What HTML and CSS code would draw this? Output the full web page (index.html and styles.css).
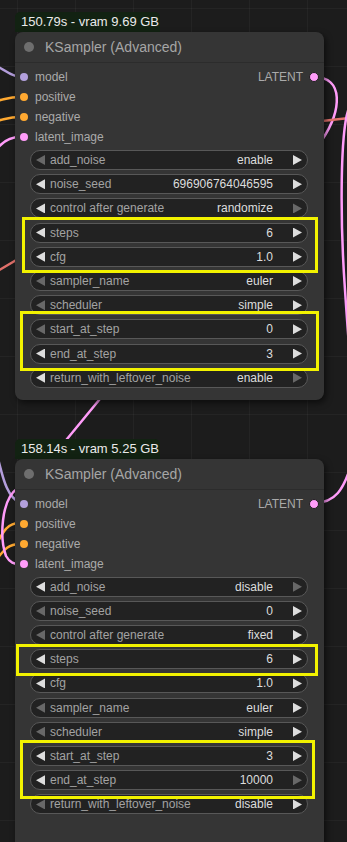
FILE: index.html
```html
<!DOCTYPE html>
<html>
<head>
<meta charset="utf-8">
<link rel="stylesheet" href="styles.css">
</head>
<body>
<svg class="links" width="347" height="842" viewBox="0 0 347 842">
  <g fill="none" stroke-width="2.5" stroke-linecap="round">
    <path d="M-4 66 C 6 70, 10 76, 20 77" stroke="#b39ddb"/>
    <path d="M-4 101 C 6 99, 10 97, 20 97" stroke="#ffa931"/>
    <path d="M-4 121 C 6 119, 10 117, 20 117" stroke="#ffa931"/>
    <path d="M-4 150 C 2 142, 10 137, 20 137" stroke="#ff9cf9"/>
    <path d="M-4 272 L 18 259" stroke="#e0706a"/>
    <path d="M314 77 C 344 77, 342 110, 322 140" stroke="#ff9cf9"/>
    <path d="M322 121 L 350 118" stroke="#e0706a"/>
    <path d="M349 108 C 340 130, 340 220, 345 290 C 347 320, 350 360, 352 380" stroke="#ff9cf9"/>
    <path d="M104 394 L 58 450" stroke="#ff9cf9"/>
    <path d="M-4 452 C 2 470, 4 495, 20 503" stroke="#b39ddb"/>
    <path d="M-4 545 C 4 530, 8 523, 20 523" stroke="#ffa931"/>
    <path d="M-4 560 C 4 550, 8 544, 20 544" stroke="#ffa931"/>
    <path d="M18 488 C 0 500, 0 540, 6 556 C 10 563, 14 564, 20 564" stroke="#ff9cf9"/>
    <path d="M314 503 C 335 503, 344 490, 352 462" stroke="#ff9cf9"/>
  </g>
</svg>
<div class="stack">
  <div class="badge">150.79s - vram 9.69 GB</div>
  <div class="node">
    <div class="title"><span class="tdot"></span>KSampler (Advanced)</div>
    <div class="io">
      <div class="col">
        <div class="slot"><i class="pin model"></i>model</div>
        <div class="slot"><i class="pin cond"></i>positive</div>
        <div class="slot"><i class="pin cond"></i>negative</div>
        <div class="slot"><i class="pin latent"></i>latent_image</div>
      </div>
      <div class="col">
        <div class="slot out">LATENT<i class="pin latent ring"></i></div>
      </div>
    </div>
    <div class="widgets">
      <div class="w"><span class="al dim"></span><span class="lbl">add_noise</span><span class="val">enable</span><span class="ar"></span></div>
      <div class="w"><span class="al"></span><span class="lbl">noise_seed</span><span class="val">696906764046595</span><span class="ar"></span></div>
      <div class="w"><span class="al"></span><span class="lbl">control after generate</span><span class="val">randomize</span><span class="ar dim"></span></div>
      <div class="hl hl-a">
        <div class="w"><span class="al"></span><span class="lbl">steps</span><span class="val">6</span><span class="ar"></span></div>
        <div class="w"><span class="al"></span><span class="lbl">cfg</span><span class="val">1.0</span><span class="ar"></span></div>
      </div>
      <div class="w"><span class="al dim"></span><span class="lbl">sampler_name</span><span class="val">euler</span><span class="ar"></span></div>
      <div class="w"><span class="al dim"></span><span class="lbl">scheduler</span><span class="val">simple</span><span class="ar"></span></div>
      <div class="hl hl-b">
        <div class="w"><span class="al dim"></span><span class="lbl">start_at_step</span><span class="val">0</span><span class="ar"></span></div>
        <div class="w"><span class="al"></span><span class="lbl">end_at_step</span><span class="val">3</span><span class="ar"></span></div>
      </div>
      <div class="w"><span class="al"></span><span class="lbl">return_with_leftover_noise</span><span class="val">enable</span><span class="ar dim"></span></div>
    </div>
  </div>

  <div class="badge second">158.14s - vram 5.25 GB</div>
  <div class="node tall">
    <div class="title"><span class="tdot"></span>KSampler (Advanced)</div>
    <div class="io">
      <div class="col">
        <div class="slot"><i class="pin model"></i>model</div>
        <div class="slot"><i class="pin cond"></i>positive</div>
        <div class="slot"><i class="pin cond"></i>negative</div>
        <div class="slot"><i class="pin latent"></i>latent_image</div>
      </div>
      <div class="col">
        <div class="slot out">LATENT<i class="pin latent ring"></i></div>
      </div>
    </div>
    <div class="widgets">
      <div class="w"><span class="al"></span><span class="lbl">add_noise</span><span class="val">disable</span><span class="ar dim"></span></div>
      <div class="w"><span class="al dim"></span><span class="lbl">noise_seed</span><span class="val">0</span><span class="ar"></span></div>
      <div class="w"><span class="al dim"></span><span class="lbl">control after generate</span><span class="val">fixed</span><span class="ar"></span></div>
      <div class="hl hl-c">
        <div class="w"><span class="al"></span><span class="lbl">steps</span><span class="val">6</span><span class="ar"></span></div>
      </div>
      <div class="w"><span class="al"></span><span class="lbl">cfg</span><span class="val">1.0</span><span class="ar"></span></div>
      <div class="w"><span class="al dim"></span><span class="lbl">sampler_name</span><span class="val">euler</span><span class="ar"></span></div>
      <div class="w"><span class="al dim"></span><span class="lbl">scheduler</span><span class="val">simple</span><span class="ar"></span></div>
      <div class="hl hl-d">
        <div class="w"><span class="al"></span><span class="lbl">start_at_step</span><span class="val">3</span><span class="ar"></span></div>
        <div class="w"><span class="al"></span><span class="lbl">end_at_step</span><span class="val">10000</span><span class="ar dim"></span></div>
      </div>
      <div class="w"><span class="al dim"></span><span class="lbl">return_with_leftover_noise</span><span class="val">disable</span><span class="ar"></span></div>
    </div>
  </div>
</div>
</body>
</html>
```

FILE: styles.css
```css
* { box-sizing: border-box; }
html, body { margin: 0; padding: 0; }
body {
  width: 347px;
  height: 842px;
  overflow: hidden;
  position: relative;
  background-color: #1c1c1c;
  background-image:
    linear-gradient(to right, rgba(255,255,255,0.035) 1px, transparent 1px),
    linear-gradient(to bottom, rgba(255,255,255,0.035) 1px, transparent 1px);
  background-size: 58px 58px;
  background-position: 17px 8px;
  font-family: "Liberation Sans", Arial, sans-serif;
}
.links {
  position: absolute;
  left: 0;
  top: 0;
  z-index: 0;
}
.stack {
  position: relative;
  z-index: 1;
  padding: 12px 0 0 15px;
  display: flex;
  flex-direction: column;
  align-items: flex-start;
}
.badge {
  height: 20px;
  width: 145px;
  background: #122212;
  color: #eaeaea;
  font-size: 13px;
  line-height: 20px;
  padding-left: 6px;
  border-radius: 5px 5px 0 0;
  white-space: nowrap;
}
.badge.second { margin-top: 39px; }
.node {
  width: 309px;
  background: #353535;
  border-radius: 8px;
  box-shadow: 2px 3px 6px rgba(0,0,0,0.55);
}
.title {
  height: 31px;
  display: flex;
  align-items: center;
  padding-left: 9px;
  gap: 11px;
  font-size: 14px;
  color: #a6a6a6;
  border-bottom: 1px solid #2c2c2c;
}
.tdot {
  width: 10px;
  height: 10px;
  border-radius: 50%;
  background: #6e6e6e;
}
.io {
  display: flex;
  justify-content: space-between;
  padding-top: 4px;
}
.col { display: flex; flex-direction: column; }
.slot {
  height: 20px;
  display: flex;
  align-items: center;
  font-size: 12px;
  color: #aaaaaa;
  padding-left: 5px;
  gap: 7px;
}
.slot.out {
  padding-left: 0;
  padding-right: 5px;
  gap: 6px;
}
.pin {
  width: 8px;
  height: 8px;
  border-radius: 50%;
  display: block;
}
.pin.model { background: #b3a0dc; }
.pin.cond { background: #ffa931; }
.pin.latent { background: #ff9cf9; }
.pin.ring {
  width: 10px;
  height: 10px;
  border: 1px solid #1f1f1f;
}
.widgets {
  display: flex;
  flex-direction: column;
  gap: 4.2px;
  padding: 3px 16px 12px 15px;
}
.node.tall .widgets { padding-bottom: 70px; }
.hl {
  position: relative;
  display: flex;
  flex-direction: column;
  gap: 4.2px;
}
.hl::after {
  content: "";
  position: absolute;
  border: 3px solid #f2f200;
  pointer-events: none;
}
.hl-a::after { top: -6px; bottom: -6px; left: -8px; right: -10px; }
.hl-b::after { top: -8px; bottom: -7px; left: -10px; right: -11px; }
.hl-c::after { top: -5px; bottom: -7px; left: -14px; right: -10px; }
.hl-d::after { top: -6px; bottom: -9px; left: -10px; right: -7px; }
.w {
  height: 20px;
  border: 1px solid #585858;
  border-radius: 10px;
  background: #222222;
  display: flex;
  align-items: center;
  padding: 0 5px;
  font-size: 12px;
  white-space: nowrap;
}
.al, .ar {
  width: 9px;
  height: 10px;
  background: #dddddd;
  flex: none;
}
.al { clip-path: polygon(0 50%, 100% 0, 100% 100%); }
.ar { clip-path: polygon(0 0, 100% 50%, 0 100%); }
.al.dim, .ar.dim { background: #686868; }
.lbl {
  margin-left: 5px;
  color: #a3a3a3;
}
.val {
  margin-left: auto;
  margin-right: 20px;
  color: #dddddd;
}
```
